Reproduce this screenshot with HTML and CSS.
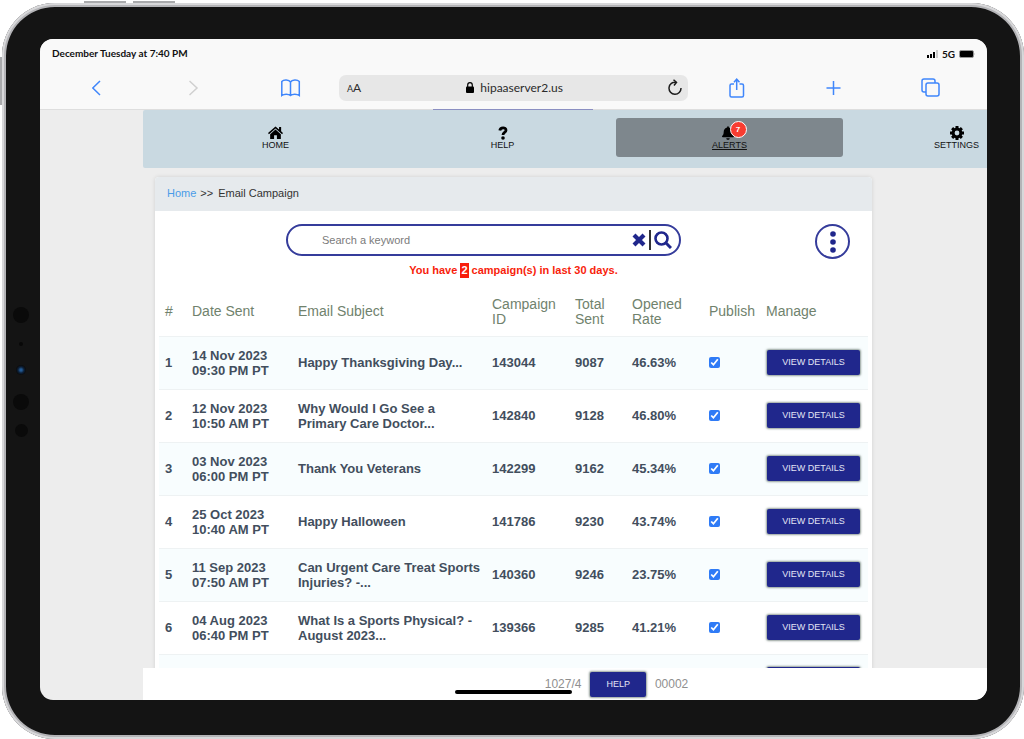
FILE: index.html
```html
<!DOCTYPE html>
<html lang="en">
<head>
<meta charset="utf-8">
<title>Email Campaign</title>
<link rel="stylesheet" href="styles.css">
</head>
<body>
<div class="device">
  <span class="key key-up"></span><span class="key key-down"></span><span class="key key-side"></span>
  <div class="sensors"><i class="lens"></i><i class="dot"></i><i class="camera"></i><i class="lens"></i><i class="lens small"></i></div>
  <div class="screen">
    <div class="status">
      <span>December Tuesday at 7:40 PM</span>
      <span class="signal">
        <svg width="11" height="8" viewBox="0 0 11 8"><path d="M0 5h2v3H0zM3 4h2v4H3zM6 2h2v6H6z"/><path d="M9 0h2v8H9z" fill="#ccc"/></svg>
        5G
        <svg width="16" height="8" viewBox="0 0 16 8"><rect x=".5" y=".5" width="14" height="7" rx="1.500" fill="#000" stroke="#999"/><path d="M15 3q1 1 0 2z" fill="#888"/></svg>
      </span>
    </div>
    <div class="browser">
      <button aria-label="Back"><svg width="10" height="16" viewBox="0 0 10 16"><path d="M8 1 .8 8 8 15"/></svg></button>
      <button class="off" aria-label="Forward"><svg width="10" height="16" viewBox="0 0 10 16"><path d="M.5 1 8 8 .5 15"/></svg></button>
      <button aria-label="Bookmarks"><svg width="20" height="18" viewBox="0 0 20 18"><path d="M9.500 3C8 .5 2.500.5.8 2.500V16.500C3 14.700 7.500 14.700 9.500 16.500 11.500 14.700 16 14.700 18.300 16.500V2.500C16.500.5 11 .5 9.500 3V16.500"/></svg></button>
      <div class="address">
        <span class="aa"><small>A</small>A</span>
        <span class="url"><svg width="8" height="11" viewBox="0 0 8 11"><rect y="4.500" width="8" height="6.500" rx="1"/><path d="M1.700 5V3a2.300 2.300 0 0 1 4.600 0v2" fill="none" stroke="#000" stroke-width="1.200"/></svg>hipaaserver2.us</span>
        <button class="reload" aria-label="Reload"><svg width="14" height="17" viewBox="0 0 14 17"><path d="M8 3.300A6 6 0 1 0 13 9M5.500.7 8.500 3.300 6 6.500"/></svg></button>
      </div>
      <button aria-label="Share"><svg width="16" height="20" viewBox="0 0 16 20"><path d="M5 6H2.500Q1 6 1 7.500V17.500Q1 19 2.500 19H13Q14.500 19 14.500 17.500V7.500Q14.500 6 13 6H10.500M7.700 12V1.500M5 4.300 7.700 1.200 10.500 4.300"/></svg></button>
      <button aria-label="New tab"><svg width="16" height="16" viewBox="0 0 16 16"><path d="M7.500 1V15M.5 8H14.500"/></svg></button>
      <button aria-label="Tabs"><svg width="19" height="19" viewBox="0 0 19 19"><rect x="5" y="5" width="13" height="13" rx="2"/><path d="M5 14H3Q1 14 1 12V3Q1 1 3 1H12Q14 1 14 3V5"/></svg></button>
      <span class="loading"></span>
    </div>
    <div class="viewport">
      <nav class="nav">
        <a href="#"><svg width="15" height="14" viewBox="0 0 16 14"><path d="M8 0 0 7l1 1.200L8 2.200l7 6L16 7 14 5.200V.7h-2.200v2.500z"/><path d="M8 3.300 2.300 8.200V13.500H6.500V9.500h3v4h4.200V8.200z"/></svg>HOME</a>
        <a href="#"><svg width="14" height="14" viewBox="0 0 14 14"><path d="M3.800 4.500C4.300 1 10 1 10 4.200 10 6.600 7 6.200 7 9" fill="none" stroke="#000" stroke-width="2.800"/><circle cx="7" cy="12" r="1.800"/></svg>HELP</a>
        <a href="#" class="active"><span class="bell"><svg width="12" height="14" viewBox="0 0 448 512"><path d="M224 512c35.320 0 63.970-28.650 63.970-64H160.030c0 35.350 28.650 64 63.970 64zm215.390-149.710c-19.320-20.760-55.470-51.990-55.470-154.290 0-77.700-54.480-139.900-127.940-155.160V32c0-17.670-14.320-32-31.980-32s-31.980 14.330-31.980 32v20.840C118.560 68.100 64.080 130.300 64.080 208c0 102.300-36.150 133.530-55.470 154.290-6 6.450-8.660 14.160-8.610 21.710.11 16.400 12.980 32 32.100 32h383.800c19.120 0 32-15.600 32.100-32 .05-7.550-2.610-15.270-8.610-21.710z"/></svg><b class="badge">7</b></span>ALERTS</a>
        <a href="#"><svg width="14" height="14" viewBox="-7 -7 14 14"><circle r="3.900" fill="none" stroke="#000" stroke-width="3"/><g stroke="#000" stroke-width="3"><path d="M0-7V-4M0 4V7M-7 0H-4M4 0H7M-4.900-4.900-3-3M3 3 4.900 4.900M-4.900 4.900-3 3M3-3 4.900-4.900"/></g></svg>SETTINGS</a>
      </nav>
      <main class="card">
        <div class="crumbs"><a href="#">Home</a><span>&gt;&gt;</span><span>Email Campaign</span></div>
        <div class="tools">
          <form class="search">
            <input type="text" placeholder="Search a keyword" aria-label="Search a keyword">
            <button type="reset" aria-label="Clear"><svg width="14" height="14" viewBox="0 0 14 14"><path d="M2 2 12 12M12 2 2 12" stroke-width="4.200"/></svg></button>
            <span class="bar"></span>
            <button type="button" aria-label="Search"><svg width="18" height="18" viewBox="0 0 18 18"><circle cx="7.500" cy="7.500" r="6" stroke-width="2.600"/><path d="M12 12 17 17" stroke-width="3"/></svg></button>
          </form>
          <button class="more" aria-label="More"><svg width="6" height="22" viewBox="0 0 6 22"><circle cx="3" cy="3" r="2.800"/><circle cx="3" cy="11" r="2.800"/><circle cx="3" cy="19" r="2.800"/></svg></button>
        </div>
        <p class="notice">You have <mark>2</mark> campaign(s) in last 30 days.</p>
        <table>
          <colgroup><col class="c-num"><col class="c-date"><col><col class="c-id"><col class="c-sent"><col class="c-rate"><col class="c-pub"><col class="c-act"></colgroup>
          <thead><tr><th>#</th><th>Date Sent</th><th>Email Subject</th><th>Campaign ID</th><th>Total Sent</th><th>Opened Rate</th><th>Publish</th><th>Manage</th></tr></thead>
          <tbody>
            <tr><td>1</td><td>14 Nov 2023<br>09:30 PM PT</td><td>Happy Thanksgiving Day...</td><td>143044</td><td>9087</td><td>46.63%</td><td><input type="checkbox" checked aria-label="Publish 143044"></td><td><button class="btn">VIEW DETAILS</button></td></tr>
            <tr><td>2</td><td>12 Nov 2023<br>10:50 AM PT</td><td>Why Would I Go See a<br>Primary Care Doctor...</td><td>142840</td><td>9128</td><td>46.80%</td><td><input type="checkbox" checked aria-label="Publish 142840"></td><td><button class="btn">VIEW DETAILS</button></td></tr>
            <tr><td>3</td><td>03 Nov 2023<br>06:00 PM PT</td><td>Thank You Veterans</td><td>142299</td><td>9162</td><td>45.34%</td><td><input type="checkbox" checked aria-label="Publish 142299"></td><td><button class="btn">VIEW DETAILS</button></td></tr>
            <tr><td>4</td><td>25 Oct 2023<br>10:40 AM PT</td><td>Happy Halloween</td><td>141786</td><td>9230</td><td>43.74%</td><td><input type="checkbox" checked aria-label="Publish 141786"></td><td><button class="btn">VIEW DETAILS</button></td></tr>
            <tr><td>5</td><td>11 Sep 2023<br>07:50 AM PT</td><td>Can Urgent Care Treat Sports<br>Injuries? -...</td><td>140360</td><td>9246</td><td>23.75%</td><td><input type="checkbox" checked aria-label="Publish 140360"></td><td><button class="btn">VIEW DETAILS</button></td></tr>
            <tr><td>6</td><td>04 Aug 2023<br>06:40 PM PT</td><td>What Is a Sports Physical? -<br>August 2023...</td><td>139366</td><td>9285</td><td>41.21%</td><td><input type="checkbox" checked aria-label="Publish 139366"></td><td><button class="btn">VIEW DETAILS</button></td></tr>
            <tr><td></td><td>10 Jul 2023<br>&nbsp;</td><td>What Is a Short Cold (Heat<br>&nbsp;</td><td></td><td></td><td></td><td></td><td><button class="btn">VIEW DETAILS</button></td></tr>
          </tbody>
        </table>
      </main>
    </div>
    <footer class="foot"><span>1027/4</span><button class="btn">HELP</button><span>00002</span></footer>
    <span class="home-bar"></span>
  </div>
</div>
</body>
</html>
```
FILE: styles.css
```css
* { box-sizing: border-box; }
body { margin: 0; background: #fff; font-family: "Liberation Sans", Arial, sans-serif; overflow: hidden; }
button { font: inherit; border: 0; background: none; padding: 0; margin: 0; }
a { color: inherit; text-decoration: none; }
svg { display: block; flex: none; }

.device {
  position: relative;
  height: calc(100vh - 3px);
  margin: 3px 0 0 2px;
  padding: 36px 37px 39px 38px;
  border-radius: 53px;
  background: #141414;
  box-shadow: inset 0 0 0 2px #d8d8da, inset 0 0 0 4px #b4b4b7;
}
.key { position: absolute; background: #a9aaac; }
.key-up { left: 82px; top: -2px; width: 42px; height: 2px; }
.key-down { left: 131px; top: -2px; width: 42px; height: 2px; }
.key-side { left: -2px; top: 54px; width: 2px; height: 48px; }
.sensors {
  position: absolute; left: 11px; top: 304px; width: 16px;
  display: flex; flex-direction: column; align-items: center; gap: 19px;
}
.lens { width: 16px; height: 16px; border-radius: 50%; background: #0a0a0a; }
.lens.small { width: 13px; height: 13px; margin-top: -5px; }
.dot { width: 4px; height: 4px; border-radius: 50%; background: #080808; }
.camera { width: 10px; height: 10px; border-radius: 50%; background: radial-gradient(circle, #235a94 0 1px, #0d2038 3px, #0a0a0a 5px); }

.screen {
  position: relative;
  height: 100%;
  display: flex; flex-direction: column;
  overflow: hidden;
  border-radius: 13px;
  background: #ededed;
}
.status {
  height: 27px; flex: none;
  display: flex; justify-content: space-between; align-items: center;
  padding: 0 12px;
  background: #f9f9f9;
  font: bold 10px Lato, sans-serif; color: #111;
}
.signal { display: flex; align-items: center; gap: 4px; padding-top: 3px; }
.browser {
  position: relative; flex: none;
  display: grid; grid-template-columns: repeat(3, 97px) 1fr repeat(3, 97px);
  align-items: center;
  height: 44px; padding: 0 8px;
  background: #f9f9f9; border-bottom: 1px solid #dedede;
}
.browser > button { display: flex; justify-content: center; }
.browser button svg { fill: none; stroke: #3f86fb; stroke-width: 1.5; }
.browser .off svg { stroke: #d0d0d0; }
.address {
  display: flex; align-items: center; justify-content: space-between;
  height: 26px; padding: 0 6px 0 8px;
  border-radius: 7px; background: #e7e7e7;
  font: 12px Lato, sans-serif; color: #2b2b2b;
}
.aa small { font-size: 9px; }
.url { display: flex; align-items: center; gap: 6px; }
.browser .reload svg { stroke: #1d1d1d; }
.loading { position: absolute; left: 393px; right: 394px; bottom: -1px; height: 1px; background: #8b8fc2; }

.viewport { flex: 1; min-height: 0; overflow: hidden; padding-left: 103px; }
.nav {
  display: flex;
  height: 58px; padding: 8px 0 0 19px;
  border-radius: 2px 0 0 2px;
  background: #c9d9e1;
  overflow: hidden;
}
.nav a {
  flex: 0 0 227px; height: 39px;
  display: flex; flex-direction: column; align-items: center;
  padding-top: 8px;
  font-size: 9px; line-height: 10px; color: #111;
}
.nav .active { background: #7e878d; border-radius: 3px; text-decoration: underline; }
.bell { position: relative; margin-right: 4px; }
.badge {
  position: absolute; left: 8px; top: -5px;
  width: 17px; height: 17px; border-radius: 50%;
  border: 1px solid #fff; background: #f83c31; color: #fff;
  font-size: 8px; line-height: 15px; text-align: center;
}

.card {
  margin: 9px 115px 0 12px;
  background: #fff; border-radius: 4px;
  box-shadow: 0 0 4px rgba(0, 0, 0, .12);
}
.crumbs {
  display: flex; align-items: center; gap: 4px;
  height: 34px; padding: 0 12px 2px;
  background: #e6eaed; border-radius: 4px 4px 0 0;
  font-size: 11px; color: #333;
}
.crumbs a { color: #4a9ce8; }
.crumbs span + span { margin-left: 1px; }
.tools {
  display: flex; justify-content: space-between; align-items: flex-start;
  padding: 13px 22px 0 131px;
}
.search {
  display: flex; align-items: center; gap: 3px;
  flex: 0 1 395px; height: 32px; padding: 0 7px 0 34px;
  border: 2px solid #353c9b; border-radius: 17px;
}
.search input {
  flex: 1; min-width: 0; padding: 0;
  border: 0; outline: 0; background: none;
  font: 11px "Liberation Sans", Arial, sans-serif; color: #333;
}
.search input::placeholder { color: #7b7b7b; opacity: 1; }
.search svg { fill: none; stroke: #20278c; }
.bar { width: 2px; height: 20px; background: #333; }
.more {
  display: flex; align-items: center; justify-content: center;
  width: 35px; height: 35px;
  border: 2px solid #353c9b; border-radius: 50%;
}
.more svg { fill: #20278c; }
.notice { margin: 4px 0 0; text-align: center; font-size: 11px; font-weight: bold; line-height: 15px; color: #f81e0c; }
.notice mark { display: inline-block; padding: 0 1px; background: #f81e0c; color: #fff; }

table { width: calc(100% - 8px); margin: 8px 4px 0; table-layout: fixed; border-collapse: collapse; font-size: 13px; line-height: 15px; }
.c-num { width: 27px; }
.c-date { width: 106px; }
.c-id { width: 83px; }
.c-sent { width: 57px; }
.c-rate { width: 77px; }
.c-pub { width: 57px; }
.c-act { width: 108px; }
th { height: 50px; padding: 2px 0 0 6px; text-align: left; font-size: 14px; font-weight: normal; color: #70826d; }
td { height: 53px; padding: 0 0 0 6px; border-top: 1px solid #eef2f3; font-weight: bold; color: #424e5d; white-space: nowrap; }
tbody tr:last-child td { height: 51px; }
tbody tr:nth-child(odd) { background: #f8fdfe; }
td input { display: block; width: 11px; height: 11px; margin: 0; accent-color: #2f7bf6; }
.btn {
  display: block; height: 25px; padding: 0 16px;
  border-radius: 2px; background: #20278c; color: #e3e5f5;
  font-size: 9px; font-weight: normal; line-height: 25px;
  box-shadow: 0 0 2px 1px rgba(60, 80, 70, .55);
}
td .btn { width: 93px; margin-left: 1px; padding: 0; }

.foot {
  flex: none;
  display: flex; align-items: center; justify-content: center; gap: 9px;
  height: 32px; margin: 0 -103px 0 103px;
  background: #fff; font-size: 12px; color: #8f8f8f;
}
.home-bar { position: absolute; left: 415px; bottom: 6px; width: 117px; height: 4px; border-radius: 2px; background: #000; }
```
